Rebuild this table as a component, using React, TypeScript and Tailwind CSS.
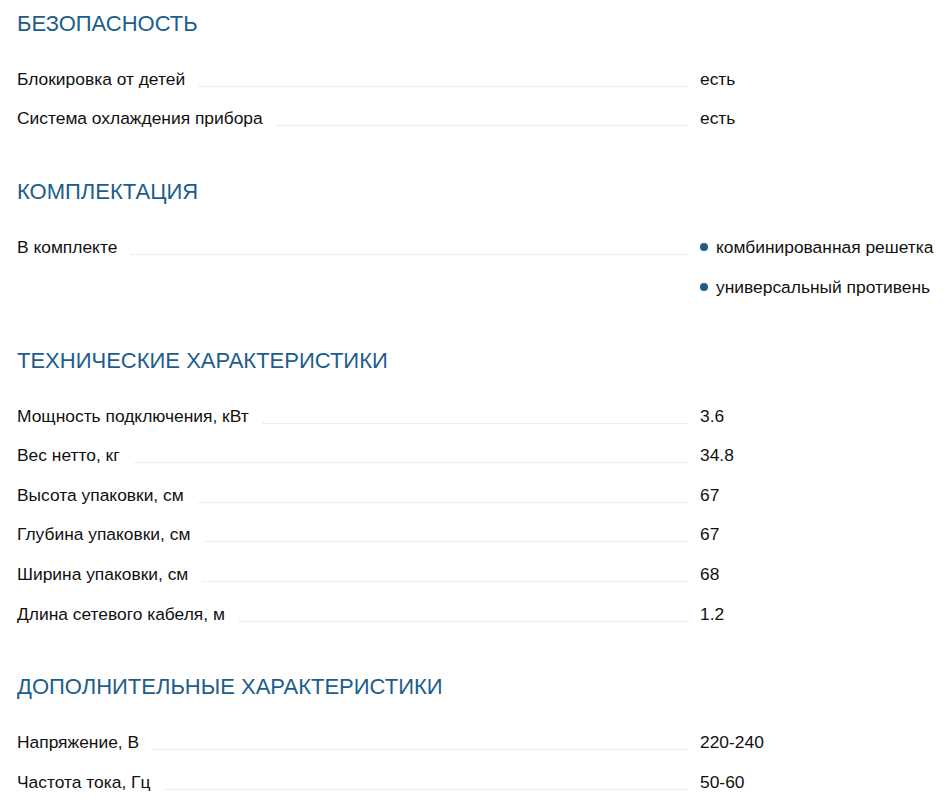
type Row = { label: string; values: string[]; list?: boolean };
type Section = { title: string; rows: Row[] };

const sections: Section[] = [
  {
    title: "БЕЗОПАСНОСТЬ",
    rows: [
      { label: "Блокировка от детей", values: ["есть"] },
      { label: "Система охлаждения прибора", values: ["есть"] },
    ],
  },
  {
    title: "КОМПЛЕКТАЦИЯ",
    rows: [
      {
        label: "В комплекте",
        values: ["комбинированная решетка", "универсальный противень"],
        list: true,
      },
    ],
  },
  {
    title: "ТЕХНИЧЕСКИЕ ХАРАКТЕРИСТИКИ",
    rows: [
      { label: "Мощность подключения, кВт", values: ["3.6"] },
      { label: "Вес нетто, кг", values: ["34.8"] },
      { label: "Высота упаковки, см", values: ["67"] },
      { label: "Глубина упаковки, см", values: ["67"] },
      { label: "Ширина упаковки, см", values: ["68"] },
      { label: "Длина сетевого кабеля, м", values: ["1.2"] },
    ],
  },
  {
    title: "ДОПОЛНИТЕЛЬНЫЕ ХАРАКТЕРИСТИКИ",
    rows: [
      { label: "Напряжение, В", values: ["220-240"] },
      { label: "Частота тока, Гц", values: ["50-60"] },
    ],
  },
];

function SpecRow({ row }: { row: Row }) {
  return (
    <div className="flex items-start gap-[13px]">
      {/* label + dotted leader */}
      <div className="flex h-[39.6px] w-[670px] shrink-0 items-center">
        <div className="flex w-full items-end">
          <span className="whitespace-nowrap leading-6">{row.label}</span>
          <span className="mb-[4px] ml-[14px] flex-1 border-b border-dotted border-[#dcdcdc]" />
        </div>
      </div>
      <div className="flex flex-col">
        {row.values.map((v) => (
          <div key={v} className="flex h-[40px] items-center whitespace-nowrap leading-6 first:h-[39.6px]">
            {row.list && (
              <span className="mr-[8px] mt-[1px] inline-block h-[8px] w-[8px] shrink-0 rounded-full bg-[#1c5d8c]" />
            )}
            {v}
          </div>
        ))}
      </div>
    </div>
  );
}

export default function App() {
  return (
    <div className="min-h-[811px] w-[946px] bg-white px-[17px] pt-[10px] font-['Liberation_Sans',Arial,sans-serif] text-[17.4px] text-[#111]">
      {sections.map((s) => (
        <section key={s.title} className="mb-[40px]">
          <h2 className="mb-[21px] h-[28px] text-[22px] leading-[28px] text-[#1c5d8c]">{s.title}</h2>
          {s.rows.map((r) => (
            <SpecRow key={r.label} row={r} />
          ))}
        </section>
      ))}
    </div>
  );
}
